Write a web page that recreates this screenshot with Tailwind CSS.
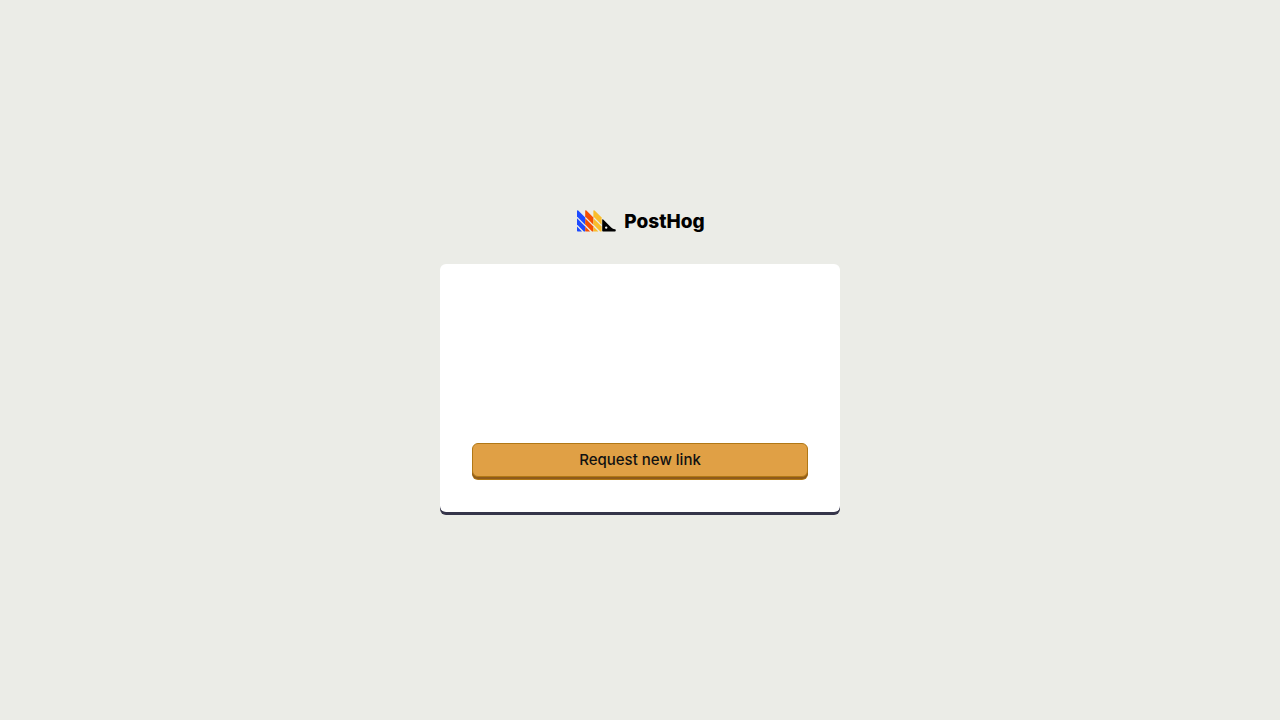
<!DOCTYPE html>
<html lang="en">
<head>
<meta charset="utf-8">
<meta name="viewport" content="width=device-width, initial-scale=1">
<title>PostHog</title>
<script src="https://cdn.jsdelivr.net/npm/@tailwindcss/browser@4"></script>
</head>
<body class="bg-[#ebece7] font-['Inter',sans-serif] text-[#111]">
<main class="flex min-h-screen flex-col items-center justify-center px-4 pt-px">
  <header class="mb-[31px] flex h-6 items-center gap-2 pl-0.5 text-black">
    <svg class="h-[22px] w-[39px]" viewBox="0 0 39 22" aria-hidden="true">
      <defs>
        <g id="bands">
          <path d="M0 .8Q.2-.2 1.2.6L8.2 7.6V14.7L0 6.5Z"/>
          <path d="M0 8.2L8.2 16.4V21.5H6.9L0 14.6Z"/>
          <path d="M0 16.5L5 21.5H.7Q0 21.5 0 20.8Z"/>
        </g>
      </defs>
      <use href="#bands" fill="#1d4aff"/>
      <use href="#bands" x="8.2" fill="#f54e00"/>
      <use href="#bands" x="16.4" fill="#f9bd2b"/>
      <path fill="#000" fill-rule="evenodd" d="M25.2 9.8Q25.3 8.8 26.2 9.5L34.2 17.5Q35.8 19 38 19.3Q38.8 19.5 38.8 20.2Q38.8 21.5 37.8 21.5H26Q25.2 21.5 25.2 20.7ZM29.2 16.4A1.2 1.2 0 1 0 29.2 18.8A1.2 1.2 0 1 0 29.2 16.4Z"/>
    </svg>
    <span class="pt-0.5 text-[19px] leading-6 font-extrabold">PostHog</span>
  </header>
  <section class="w-full max-w-[400px] rounded-md bg-white px-8 pt-[179px] pb-8 shadow-[0_3px_0_#35354a]">
    <button type="button" class="mb-[3px] block w-full rounded-md border border-[#b17816] bg-[#e0a045] py-1 text-[15px] leading-6 font-medium shadow-[0_2px_0_#8f5b1c,0_3px_0_#b17816]">Request new link</button>
  </section>
</main>
</body>
</html>
